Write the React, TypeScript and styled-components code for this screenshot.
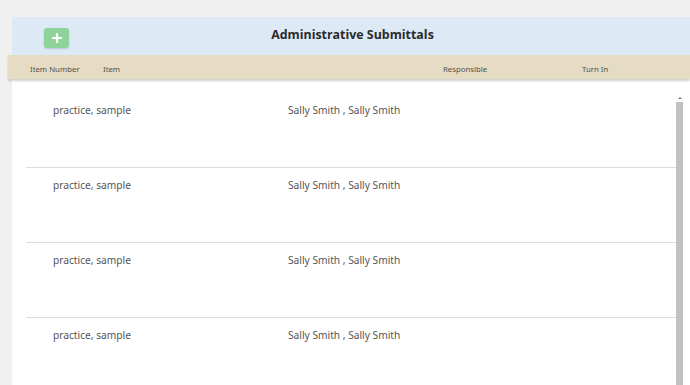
import styled, { createGlobalStyle } from "styled-components";

const GlobalStyle = createGlobalStyle`
	html, body {
		margin: 0;
		padding: 0;
		background: #f0f0f0;
		overflow: hidden;
	}
	body {
		font-family: "Noto Sans", "Open Sans", sans-serif;
	}
`;

const rows = [
	{ item: "practice, sample", responsible: "Sally Smith , Sally Smith" },
	{ item: "practice, sample", responsible: "Sally Smith , Sally Smith" },
	{ item: "practice, sample", responsible: "Sally Smith , Sally Smith" },
	{ item: "practice, sample", responsible: "Sally Smith , Sally Smith" },
];

const App = () => {
	return (
		<Page>
			<GlobalStyle />
			<TitleBar>
				<AddCell>
					<AddButton aria-label='add'>
						<svg width='10' height='10' viewBox='0 0 10 10'>
							<path d='M5 1v8M1 5h8' stroke='#fff' strokeWidth='2.2' strokeLinecap='round' />
						</svg>
					</AddButton>
				</AddCell>
				<Title>Administrative Submittals</Title>
				<div />
			</TitleBar>
			<ColumnBar>
				<ColLabel>Item Number</ColLabel>
				<ColLabel>Item</ColLabel>
				<ColLabel>Responsible</ColLabel>
				<ColLabel>Turn In</ColLabel>
			</ColumnBar>
			<Panel>
				<List>
					{rows.map((r, i) => (
						<Row key={i} first={i === 0}>
							<Cell>{r.item}</Cell>
							<Cell>{r.responsible}</Cell>
						</Row>
					))}
				</List>
				<Scrollbar>
					<ScrollArrow />
					<ScrollThumb />
				</Scrollbar>
			</Panel>
		</Page>
	);
};
export default App;

const Page = styled.div`
	width: 690px;
	height: 385px;
	padding: 17px 0 0 12px;
	box-sizing: border-box;
	display: flex;
	flex-direction: column;
	overflow: hidden;
`;

const TitleBar = styled.div`
	height: 38px;
	background: #dde9f5;
	display: grid;
	grid-template-columns: 1fr auto 1fr;
	align-items: center;
`;

const AddCell = styled.div`
	display: flex;
	align-items: center;
	padding-left: 32px;
`;

const AddButton = styled.div`
	width: 25px;
	height: 20px;
	border-radius: 3px;
	background: #8ed49a;
	box-shadow: 0 1px 2px rgba(0, 0, 0, 0.15);
	display: flex;
	align-items: center;
	justify-content: center;
	margin-top: 4px;
`;

const Title = styled.div`
	font-family: "Open Sans", sans-serif;
	font-weight: 700;
	font-size: 12.4px;
	color: #2b2b2b;
	margin-top: -4px;
	padding-left: 3px;
`;

const ColumnBar = styled.div`
	height: 24px;
	margin-left: -4px;
	background: #e6dcc3;
	box-shadow: 0 2px 2px rgba(0, 0, 0, 0.18);
	display: grid;
	grid-template-columns: 73px 340px 139px 1fr;
	align-items: center;
	padding-left: 22px;
	position: relative;
	z-index: 1;
`;

const ColLabel = styled.div`
	font-size: 7.8px;
	color: #505050;
	padding-top: 3px;
`;

const Panel = styled.div`
	flex: 1;
	background: #fff;
	display: flex;
	flex-direction: row;
	min-height: 0;
`;

const List = styled.div`
	flex: 1;
	padding: 13px 0 0 14px;
`;

const Row = styled.div<{ first?: boolean }>`
	border-top: 1px solid ${(p) => (p.first ? "transparent" : "#dcdcdc")};
	display: grid;
	grid-template-columns: 262px 1fr;
	align-items: start;
	padding-top: 10px;
	height: 64px;
`;

const Cell = styled.div`
	font-size: 10.2px;
	color: #555;
	padding-left: 27px;
	line-height: 14px;

	& + & {
		padding-left: 0;
	}
`;

const Scrollbar = styled.div`
	width: 7px;
	margin: 16px 7px 0 0;
	display: flex;
	flex-direction: column;
	align-items: stretch;
`;

const ScrollArrow = styled.div`
	height: 6px;
	display: flex;
	justify-content: center;
	align-items: center;
	&::after {
		content: "";
		width: 0;
		height: 0;
		border-left: 2px solid transparent;
		border-right: 2px solid transparent;
		border-bottom: 2px solid #777;
	}
`;

const ScrollThumb = styled.div`
	flex: 1;
	background: #c1c1c1;
	margin-top: 1px;
`;
